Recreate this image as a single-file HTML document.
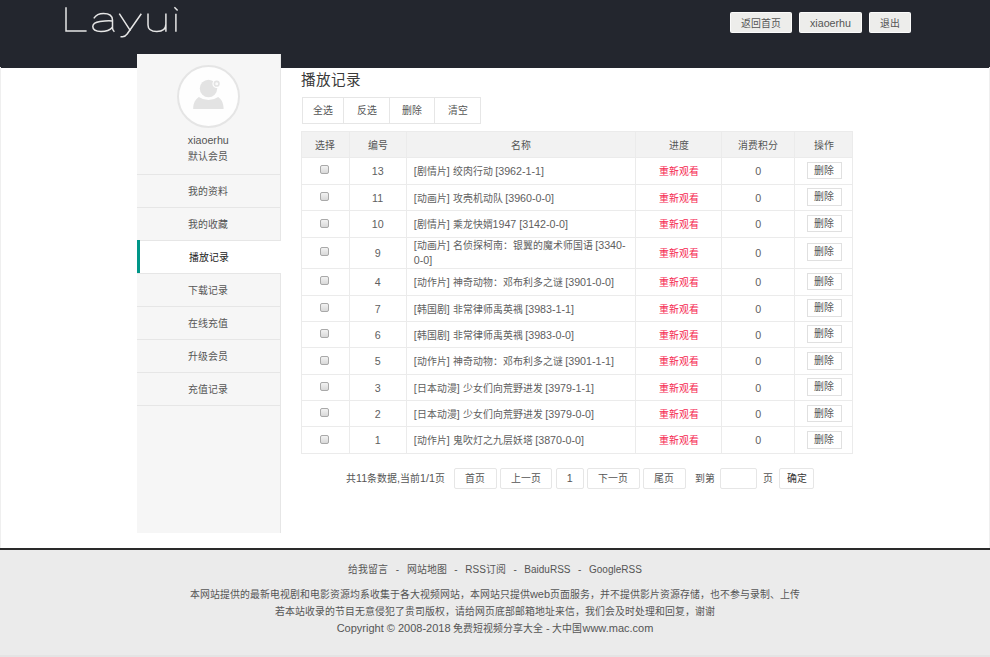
<!DOCTYPE html>
<html lang="zh-CN"><head><meta charset="utf-8">
<style>
*{margin:0;padding:0;box-sizing:border-box}
html,body{width:990px;height:657px;overflow:hidden;background:#fff}
body{position:relative;font-family:"Liberation Sans",sans-serif;font-size:9.9px;color:#666}
.abs{position:absolute}
.l{font-size:10.7px}
#hdr{left:0;top:0;width:990px;height:67.5px;background:#23262e}
.hbtn{position:absolute;top:12.2px;height:21.3px;background:#ededeb;border:1.2px solid #fbfbfb;color:#555;text-align:center;line-height:21.2px;font-size:9.9px;border-radius:1.5px}
#side{left:136.8px;top:53.9px;width:144.2px;height:479.4px;background:#f6f6f6;border-right:1px solid #e6e6e6}
.avatar{position:absolute;left:40px;top:10.7px;width:63.6px;height:63.6px;border-radius:50%;border:2px solid #e5e5e5;background:#fefefe}
.uname{position:absolute;left:0;width:143px;text-align:center;color:#555}
.menu{position:absolute;left:0;width:143.2px;height:33px;border-top:1px solid #e6e6e6;text-align:center;line-height:33.4px;color:#555}
.menu.on{background:#fff;color:#222;width:144.2px}
.menu.on::before{content:"";position:absolute;left:0;top:-1px;bottom:0;width:3px;background:#009688}
#title{left:301.3px;top:68px;font-size:14.6px;color:#3a3a3a;line-height:24px}
#bg{left:301.6px;top:96.6px;height:27px;border:1px solid #e6e6e6;display:flex}
#bg span{display:block;height:25px;line-height:26.6px;text-align:center;border-right:1px solid #e6e6e6;color:#555}
#bg span:last-child{border-right:0}
table{position:absolute;left:301px;top:130.8px;width:351.2px;border-collapse:collapse;table-layout:fixed}
td,th{border:1px solid #ebebeb;text-align:center;font-weight:normal;color:#606060;line-height:15px;padding:1.6px 0 0}
th{background:#f2f2f2;color:#555}
td.n{text-align:left;padding-left:7px}
.two td{padding-top:0.4px}
.red{color:#f5254f}
.cb{display:inline-block;width:8.3px;height:9px;border:1px solid #a9a9a9;border-radius:2px;background:linear-gradient(#f2f2f2,#d9d9d9);vertical-align:middle;position:relative;top:-2.6px;left:-0.9px}
.del{display:inline-block;width:35px;height:17.7px;line-height:16px;border:1px solid #e0e0e0;background:#fff;color:#555;position:relative;top:-1.2px;left:0.5px;vertical-align:middle}
.pg{position:absolute;top:467.5px;height:21.2px;border:1px solid #e6e6e6;border-radius:2px;text-align:center;line-height:19px;color:#555}
.ptxt{position:absolute;top:467.5px;line-height:21px;color:#555}
#ftr{left:0;top:548.3px;width:990px;height:108.7px;background:#ebebeb;border-top:2px solid #2a2a2a}
.sep{font-weight:normal;margin:0 7.6px}
.fl.f1 .l{font-size:10px}
.fl .l{font-size:11px}
.fl{position:absolute;left:0;width:990px;text-align:center;color:#555;white-space:nowrap}
</style></head><body>
<div id="hdr" class="abs">
<svg class="abs" style="left:0;top:0" width="200" height="45" viewBox="0 0 200 45" fill="none" stroke="#e6e6e6" stroke-width="1.5" stroke-linecap="butt">
<path d="M66 7.3V31.1H86.6"/>
<path d="M93.8 18.3C96 15 99.5 13.5 103.5 13.5C109 13.5 112.4 16 112.5 20V28C112.5 30 113.5 31 114.4 31.8"/>
<path d="M112.3 21C108 20.6 104 21 100 21.5C95 22.3 92.8 24 92.8 26.6C92.8 29.6 96 31.5 101 31.5C106 31.5 110.5 29.6 112.5 27.2"/>
<path d="M119.3 13.7L130.5 30.8M141.3 13.7L127 34.2C126 35.8 124.5 36.7 122.5 36.7H120.5"/>
<path d="M148 13.5V25C148 29.5 151 31.5 156.8 31.5C162.3 31.5 165.9 29 165.9 24M165.9 13.5V31.8"/>
<path d="M175.9 13.7V31.8M174.4 7.3L177.6 10.5"/>
</svg>
<div class="hbtn" style="left:730px;width:62px">返回首页</div>
<div class="hbtn" style="left:799px;width:63px"><span class="l">xiaoerhu</span></div>
<div class="hbtn" style="left:869px;width:42px">退出</div>
</div>

<div id="side" class="abs">
<div class="avatar"></div>
<svg class="abs" style="left:33.2px;top:6.1px" width="80" height="80" viewBox="170 60 80 80">
<circle cx="208.5" cy="88.5" r="8.7" fill="#e3e3e3"/>
<circle cx="216.7" cy="83.7" r="4.3" fill="#fefefe"/>
<circle cx="216.7" cy="83.7" r="2.3" fill="#fafafa" stroke="#e3e3e3" stroke-width="1.6"/>
<path d="M193.2 108.9C193.2 103 195.5 99.3 198.8 97A17 17 0 0 0 218.2 97C221.5 99.3 223.6 103 223.6 108.9Z" fill="#e3e3e3"/>
</svg>
<div class="uname" style="top:79px;line-height:15px"><span class="l">xiaoerhu</span></div>
<div class="uname" style="top:95.4px;line-height:15px">默认会员</div>
<div class="menu" style="top:120.2px">我的资料</div>
<div class="menu" style="top:153.2px">我的收藏</div>
<div class="menu on" style="top:186.2px">播放记录</div>
<div class="menu" style="top:219.2px">下载记录</div>
<div class="menu" style="top:252.2px">在线充值</div>
<div class="menu" style="top:285.2px">升级会员</div>
<div class="menu" style="top:318.2px">充值记录</div>
<div class="menu" style="top:351px;height:1px"></div>
</div>

<div id="title" class="abs">播放记录</div>
<div id="bg" class="abs">
<span style="width:41.9px">全选</span><span style="width:45.4px">反选</span><span style="width:45.5px">删除</span><span style="width:44.4px">清空</span>
</div>

<table>
<colgroup><col style="width:47.5px"><col style="width:57.3px"><col style="width:229.5px"><col style="width:86px"><col style="width:72.7px"><col style="width:58.2px"></colgroup>
<tr style="height:26.4px"><th>选择</th><th>编号</th><th>名称</th><th>进度</th><th>消费积分</th><th>操作</th></tr>
<tr style="height:26.4px"><td><i class="cb"></i></td><td><span class="l">13</span></td><td class="n"><span class="l">[</span>剧情片<span class="l">]</span> 绞肉行动 <span class="l">[3962-1-1]</span></td><td class="red">重新观看</td><td><span class="l">0</span></td><td><span class="del">删除</span></td></tr>
<tr style="height:26.7px"><td><i class="cb"></i></td><td><span class="l">11</span></td><td class="n"><span class="l">[</span>动画片<span class="l">]</span> 攻壳机动队 <span class="l">[3960-0-0]</span></td><td class="red">重新观看</td><td><span class="l">0</span></td><td><span class="del">删除</span></td></tr>
<tr style="height:26.3px"><td><i class="cb"></i></td><td><span class="l">10</span></td><td class="n"><span class="l">[</span>剧情片<span class="l">]</span> 乘龙快婿<span class="l">1947 [3142-0-0]</span></td><td class="red">重新观看</td><td><span class="l">0</span></td><td><span class="del">删除</span></td></tr>
<tr class="two" style="height:31.7px"><td><i class="cb"></i></td><td><span class="l">9</span></td><td class="n"><span class="l">[</span>动画片<span class="l">]</span> 名侦探柯南：银翼的魔术师国语 <span class="l">[3340-</span><br><span class="l">0-0]</span></td><td class="red">重新观看</td><td><span class="l">0</span></td><td><span class="del">删除</span></td></tr>
<tr style="height:26.3px"><td><i class="cb"></i></td><td><span class="l">4</span></td><td class="n"><span class="l">[</span>动作片<span class="l">]</span> 神奇动物：邓布利多之谜 <span class="l">[3901-0-0]</span></td><td class="red">重新观看</td><td><span class="l">0</span></td><td><span class="del">删除</span></td></tr>
<tr style="height:26.4px"><td><i class="cb"></i></td><td><span class="l">7</span></td><td class="n"><span class="l">[</span>韩国剧<span class="l">]</span> 非常律师禹英禑 <span class="l">[3983-1-1]</span></td><td class="red">重新观看</td><td><span class="l">0</span></td><td><span class="del">删除</span></td></tr>
<tr style="height:26.4px"><td><i class="cb"></i></td><td><span class="l">6</span></td><td class="n"><span class="l">[</span>韩国剧<span class="l">]</span> 非常律师禹英禑 <span class="l">[3983-0-0]</span></td><td class="red">重新观看</td><td><span class="l">0</span></td><td><span class="del">删除</span></td></tr>
<tr style="height:26.6px"><td><i class="cb"></i></td><td><span class="l">5</span></td><td class="n"><span class="l">[</span>动作片<span class="l">]</span> 神奇动物：邓布利多之谜 <span class="l">[3901-1-1]</span></td><td class="red">重新观看</td><td><span class="l">0</span></td><td><span class="del">删除</span></td></tr>
<tr style="height:26.4px"><td><i class="cb"></i></td><td><span class="l">3</span></td><td class="n"><span class="l">[</span>日本动漫<span class="l">]</span> 少女们向荒野进发 <span class="l">[3979-1-1]</span></td><td class="red">重新观看</td><td><span class="l">0</span></td><td><span class="del">删除</span></td></tr>
<tr style="height:26.1px"><td><i class="cb"></i></td><td><span class="l">2</span></td><td class="n"><span class="l">[</span>日本动漫<span class="l">]</span> 少女们向荒野进发 <span class="l">[3979-0-0]</span></td><td class="red">重新观看</td><td><span class="l">0</span></td><td><span class="del">删除</span></td></tr>
<tr style="height:26.4px"><td><i class="cb"></i></td><td><span class="l">1</span></td><td class="n"><span class="l">[</span>动作片<span class="l">]</span> 鬼吹灯之九层妖塔 <span class="l">[3870-0-0]</span></td><td class="red">重新观看</td><td><span class="l">0</span></td><td><span class="del">删除</span></td></tr>
</table>

<div class="ptxt" style="left:346px">共<span class="l">11</span>条数据<span class="l">,</span>当前<span class="l">1/1</span>页</div>
<div class="pg" style="left:454.2px;width:42.6px">首页</div>
<div class="pg" style="left:500px;width:52.4px">上一页</div>
<div class="pg" style="left:555.6px;width:28.3px"><span class="l">1</span></div>
<div class="pg" style="left:587.3px;width:52.4px">下一页</div>
<div class="pg" style="left:643.4px;width:42.2px">尾页</div>
<div class="ptxt" style="left:694.5px">到第</div>
<div class="pg" style="left:720.2px;width:37.1px"></div>
<div class="ptxt" style="left:762.8px">页</div>
<div class="pg" style="left:778.8px;width:35.6px;color:#333">确定</div>

<div id="ftr" class="abs">
<div class="fl f1" style="top:11.4px;line-height:16px">给我留言<b class="sep"><span class="l">-</span></b>网站地图<b class="sep"><span class="l">-</span></b><span class="l">RSS</span>订阅<b class="sep"><span class="l">-</span></b><span class="l">BaiduRSS</span><b class="sep"><span class="l">-</span></b><span class="l">GoogleRSS</span></div>
<div class="fl" style="top:35.3px;line-height:16px">本网站提供的最新电视剧和电影资源均系收集于各大视频网站，本网站只提供<span class="l">web</span>页面服务，并不提供影片资源存储，也不参与录制、上传</div>
<div class="fl" style="top:53.3px;line-height:16px">若本站收录的节目无意侵犯了贵司版权，请给网页底部邮箱地址来信，我们会及时处理和回复，谢谢</div>
<div class="fl" style="top:69.7px;line-height:16px"><span class="l">Copyright © 2008-2018</span> 免费短视频分享大全 <span class="l">-</span> 大中国<span class="l">www.mac.com</span></div>
</div>
<div class="abs" style="left:0;top:67px;width:1px;height:481px;background:#efefef"></div>
<div class="abs" style="left:989px;top:67px;width:1px;height:481px;background:#efefef"></div>
<div class="abs" style="left:0;top:655px;width:990px;height:2px;background:#e4e4e4"></div>
</body></html>
